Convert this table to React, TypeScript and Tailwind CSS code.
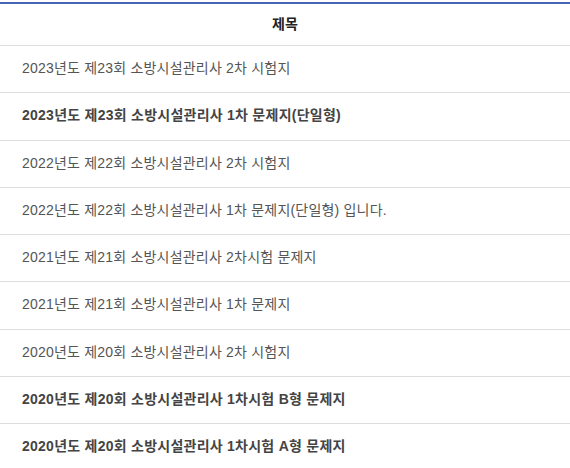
const ROWS: { title: string; bold?: boolean }[] = [
  { title: "2023년도 제23회 소방시설관리사 2차 시험지" },
  { title: "2023년도 제23회 소방시설관리사 1차 문제지(단일형)", bold: true },
  { title: "2022년도 제22회 소방시설관리사 2차 시험지" },
  { title: "2022년도 제22회 소방시설관리사 1차 문제지(단일형) 입니다." },
  { title: "2021년도 제21회 소방시설관리사 2차시험 문제지" },
  { title: "2021년도 제21회 소방시설관리사 1차 문제지" },
  { title: "2020년도 제20회 소방시설관리사 2차 시험지" },
  { title: "2020년도 제20회 소방시설관리사 1차시험 B형 문제지", bold: true },
  { title: "2020년도 제20회 소방시설관리사 1차시험 A형 문제지", bold: true },
];

export default function App() {
  return (
    <div className="h-[468px] w-[570px] overflow-hidden bg-white pt-[2px] font-['Liberation_Sans','Noto_Sans_CJK_KR',sans-serif]">
      <div className="border-t-2 border-[#4665b5]">
        <div className="flex h-[42px] items-center justify-center border-b border-[#dddddd] text-[14px] font-bold text-[#222]">
          제목
        </div>
        {ROWS.map((row) => (
          <div
            key={row.title}
            className={
              row.bold
                ? "flex h-[47.25px] items-center border-b border-[#dddddd] pb-[1px] pl-[22px] text-[14px] font-bold tracking-[0.25px] text-[#444]"
                : "flex h-[47.25px] items-center border-b border-[#dddddd] pb-[1px] pl-[22px] text-[14px] tracking-[0.2px] text-[#555]"
            }
          >
            {row.title}
          </div>
        ))}
      </div>
    </div>
  );
}
